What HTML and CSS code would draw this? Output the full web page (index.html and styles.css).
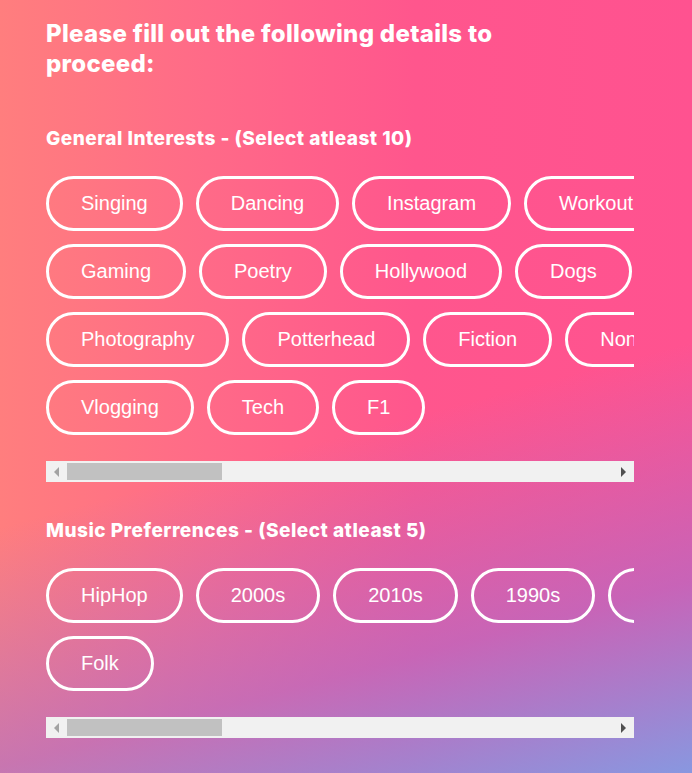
FILE: index.html
```html
<!DOCTYPE html>
<html>
<head>
<meta charset="utf-8">
<link rel="stylesheet" href="styles.css">
</head>
<body>
<main class="page">
  <h1 class="title">Please fill out the following details to<br>proceed:</h1>

  <section class="group">
    <h2 class="label">General Interests - (Select atleast 10)</h2>
    <div class="scroller">
      <div class="rows">
        <div class="row">
          <span class="chip">Singing</span>
          <span class="chip">Dancing</span>
          <span class="chip">Instagram</span>
          <span class="chip">Workout</span>
        </div>
        <div class="row">
          <span class="chip">Gaming</span>
          <span class="chip">Poetry</span>
          <span class="chip">Hollywood</span>
          <span class="chip">Dogs</span>
        </div>
        <div class="row">
          <span class="chip">Photography</span>
          <span class="chip">Potterhead</span>
          <span class="chip">Fiction</span>
          <span class="chip">Non-Fiction</span>
        </div>
        <div class="row">
          <span class="chip">Vlogging</span>
          <span class="chip">Tech</span>
          <span class="chip">F1</span>
        </div>
      </div>
      <div class="bar">
        <span class="arrow arrow-left"></span>
        <span class="track"><span class="thumb"></span></span>
        <span class="arrow arrow-right"></span>
      </div>
    </div>
  </section>

  <section class="group">
    <h2 class="label">Music Preferrences - (Select atleast 5)</h2>
    <div class="scroller">
      <div class="rows">
        <div class="row">
          <span class="chip">HipHop</span>
          <span class="chip">2000s</span>
          <span class="chip">2010s</span>
          <span class="chip">1990s</span>
          <span class="chip">Rock</span>
        </div>
        <div class="row">
          <span class="chip">Folk</span>
        </div>
      </div>
      <div class="bar">
        <span class="arrow arrow-left"></span>
        <span class="track"><span class="thumb"></span></span>
        <span class="arrow arrow-right"></span>
      </div>
    </div>
  </section>
</main>
</body>
</html>
```

FILE: styles.css
```css
html, body {
  margin: 0;
  padding: 0;
}

body {
  min-height: 773px;
  background:
    linear-gradient(165deg, rgba(160, 112, 212, 0) 55%, rgba(160, 112, 212, 0.58) 80%, rgba(130, 155, 228, 0.95) 100%),
    linear-gradient(90deg, #ff7e7e 0%, #ff6a88 30%, #ff568d 60%, #ff5290 100%);
  font-family: Inter, "Liberation Sans", sans-serif;
  color: #fff;
}

.page {
  padding: 19px 0 30px 46px;
  width: 588px;
}

.title {
  margin: 0;
  font-family: Inter, sans-serif;
  font-weight: 800;
  font-size: 24px;
  line-height: 30px;
  letter-spacing: 0.3px;
}

.group {
  margin-top: 48px;
}

.group + .group {
  margin-top: 37px;
}

.label {
  margin: 0 0 25px;
  font-family: Inter, sans-serif;
  font-weight: 800;
  font-size: 19px;
  line-height: 24px;
  letter-spacing: 0.5px;
}

.scroller {
  width: 588px;
}

.rows {
  overflow: hidden;
  display: flex;
  flex-direction: column;
  gap: 13px;
  padding-bottom: 26px;
}

.row {
  display: flex;
  gap: 13px;
  flex-wrap: nowrap;
}

.chip {
  flex: none;
  box-sizing: border-box;
  height: 55px;
  padding: 0 32px;
  border: 3px solid #fff;
  border-radius: 28px;
  font-family: "Liberation Sans", Arial, sans-serif;
  font-size: 20px;
  line-height: 49px;
  white-space: nowrap;
}

.bar {
  display: flex;
  align-items: center;
  height: 21px;
  background: #f1f1f1;
}

.arrow {
  flex: none;
  width: 21px;
  height: 21px;
  display: flex;
  align-items: center;
  justify-content: center;
}

.arrow::before {
  content: "";
  width: 0;
  height: 0;
  border-top: 5px solid transparent;
  border-bottom: 5px solid transparent;
}

.arrow-left::before {
  border-right: 5px solid #a3a3a3;
}

.arrow-right::before {
  border-left: 5px solid #505050;
}

.track {
  flex: 1;
  height: 21px;
  display: flex;
  align-items: center;
}

.thumb {
  width: 155px;
  height: 17px;
  background: #c1c1c1;
}
```
